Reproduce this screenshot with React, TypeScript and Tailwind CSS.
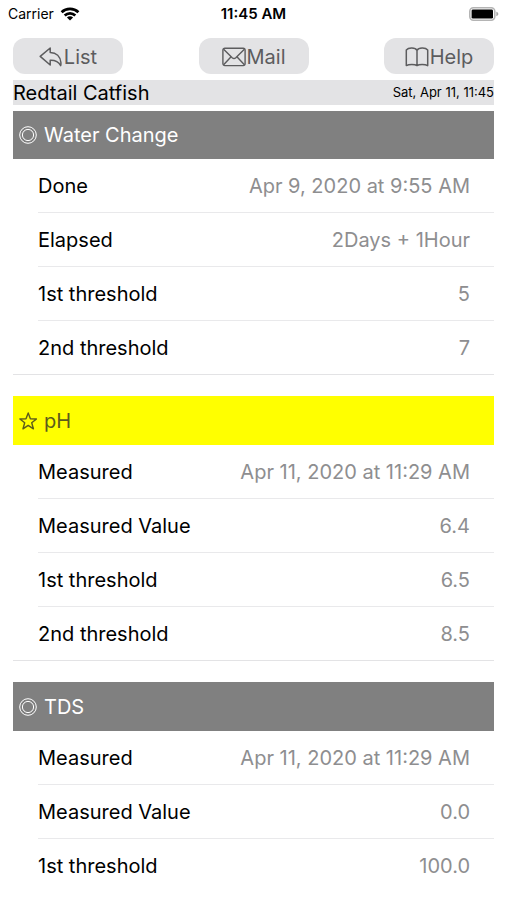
import type { ReactNode } from 'react'

type Row = { label: string; value: string }
type Group = { title: string; alert?: boolean; rows: Row[] }

const GROUPS: Group[] = [
  {
    title: 'Water Change',
    rows: [
      { label: 'Done', value: 'Apr 9, 2020 at 9:55 AM' },
      { label: 'Elapsed', value: '2Days + 1Hour' },
      { label: '1st threshold', value: '5' },
      { label: '2nd threshold', value: '7' },
    ],
  },
  {
    title: 'pH',
    alert: true,
    rows: [
      { label: 'Measured', value: 'Apr 11, 2020 at 11:29 AM' },
      { label: 'Measured Value', value: '6.4' },
      { label: '1st threshold', value: '6.5' },
      { label: '2nd threshold', value: '8.5' },
    ],
  },
  {
    title: 'TDS',
    rows: [
      { label: 'Measured', value: 'Apr 11, 2020 at 11:29 AM' },
      { label: 'Measured Value', value: '0.0' },
      { label: '1st threshold', value: '100.0' },
    ],
  },
]

function WifiIcon() {
  return (
    <svg width="20" height="14" viewBox="0 0 20 14" aria-hidden="true">
      <g fill="none" stroke="#000" strokeWidth="2.7">
        <path d="M1.6 5.2C6.2.7 13.8.7 18.4 5.2" />
        <path d="M4.7 8.5C7.7 5.6 12.3 5.6 15.3 8.5" />
      </g>
      <path d="M10 13.6 6.9 10.5C8.7 8.9 11.3 8.9 13.1 10.5Z" />
    </svg>
  )
}

function BatteryIcon() {
  return (
    <svg width="31" height="14" viewBox="0 0 31 14" aria-hidden="true">
      <rect x="1.8" y="0.8" width="25" height="12.4" rx="3.6" fill="#fff" stroke="#b4b4b4" strokeWidth="1.6" />
      <rect x="3.6" y="2.4" width="21.4" height="9.2" rx="1.4" />
      <path d="M28.3 4.8c1.3.4 2 1.2 2 2.2s-.7 1.8-2 2.2z" fill="#a6a6a6" />
    </svg>
  )
}

function ReplyIcon() {
  return (
    <svg width="24" height="20" viewBox="0 0 24 20" fill="none" stroke="currentColor" strokeWidth="1.5" strokeLinejoin="round" aria-hidden="true">
      <path d="M11.2 1 1.2 9.400l10 8.600v-4.700c4.800-.2 8.100.900 10.500 5.300.3-1 .3-2 .2-3.100-.5-6-4.600-9.900-10.700-10.100z" />
    </svg>
  )
}

function MailIcon() {
  return (
    <svg width="24" height="20" viewBox="0 0 24 20" fill="none" stroke="currentColor" strokeWidth="1.4" strokeLinejoin="round" aria-hidden="true">
      <rect x="0.9" y="1.2" width="22.2" height="17.4" rx="2" />
      <path d="m1.6 2.2 8.6 8.5c1.2 1.1 2.4 1.1 3.6 0l8.6-8.5M1.6 17.8l7.5-8.1M22.4 17.8l-7.5-8.1" />
    </svg>
  )
}

function BookIcon() {
  return (
    <svg width="24" height="20" viewBox="0 0 24 20" fill="none" stroke="currentColor" strokeWidth="1.5" strokeLinejoin="round" aria-hidden="true">
      <path d="M12 3.4C10.4.5 3.6.3 1.300 3v15.600c2.600-1.600 8.700-1.600 10.700 0 2-1.600 8.100-1.600 10.700 0V3C20.400.3 13.600.5 12 3.400zV18.600" />
    </svg>
  )
}

function RingIcon() {
  return (
    <svg width="18" height="18" viewBox="0 0 18 18" fill="none" stroke="#fff" strokeWidth="1" aria-hidden="true">
      <circle cx="9" cy="9" r="8.3" />
      <circle cx="9" cy="9" r="5.6" />
    </svg>
  )
}

function StarIcon() {
  return (
    <svg width="18" height="18" viewBox="0 0 18 18" fill="none" stroke="currentColor" strokeWidth="1.4" strokeLinejoin="round" aria-hidden="true">
      <path d="m9.200.900 2.200 5.900 6.100.2-4.800 3.800 1.700 6-5.200-3.400L4 16.800l1.700-6L.9 7l6.100-.2z" />
    </svg>
  )
}

function ToolbarButton({ icon, label }: { icon: ReactNode; label: string }) {
  return (
    <button type="button" className="flex h-9 w-[110px] items-center justify-center gap-px rounded-xl bg-[#e3e3e5] pt-px text-xl text-[#5c5c5e]">
      {icon}
      {label}
    </button>
  )
}

function GroupSection({ group }: { group: Group }) {
  return (
    <section className="group">
      <h2
        className={`flex h-[49px] items-center gap-[7px] px-1.5 text-xl group-first:h-12 ${
          group.alert ? 'bg-[#ffff00] text-[#5c5c1c]' : 'bg-[#808080] text-white'
        }`}
      >
        {group.alert ? <StarIcon /> : <RingIcon />}
        {group.title}
      </h2>
      <dl className="text-xl group-not-last:border-b group-not-last:border-[#e3e3e5]">
        {group.rows.map((row) => (
          <div
            key={row.label}
            className="ml-[25px] flex h-[54px] items-center justify-between border-b border-[#e9e9eb] pr-6 last:h-[53px] last:border-b-0"
          >
            <dt className="text-black">{row.label}</dt>
            <dd className="text-[#8e8e90]">{row.value}</dd>
          </div>
        ))}
      </dl>
    </section>
  )
}

export default function App() {
  return (
    <div className="bg-white font-['Inter','Liberation_Sans',sans-serif]">
      <div className="grid h-7 grid-cols-3 items-center px-2 text-sm text-black">
        <div className="flex items-center gap-1.5">
          <span>Carrier</span>
          <WifiIcon />
        </div>
        <div className="text-center text-[15px] font-semibold">11:45 AM</div>
        <div className="flex justify-end">
          <BatteryIcon />
        </div>
      </div>

      <div className="px-[13px]">
        <nav className="mt-2.5 flex justify-between">
          <ToolbarButton icon={<ReplyIcon />} label="List" />
          <ToolbarButton icon={<MailIcon />} label="Mail" />
          <ToolbarButton icon={<BookIcon />} label="Help" />
        </nav>

        <header className="mt-1.5 flex h-[25px] items-center justify-between bg-[#e3e3e5] text-black">
          <h1 className="text-xl">Redtail Catfish</h1>
          <time className="text-[13px]">Sat, Apr 11, 11:45</time>
        </header>

        <main className="mt-1.5 flex flex-col gap-[21px]">
          {GROUPS.map((group) => (
            <GroupSection key={group.title} group={group} />
          ))}
        </main>
      </div>
    </div>
  )
}
